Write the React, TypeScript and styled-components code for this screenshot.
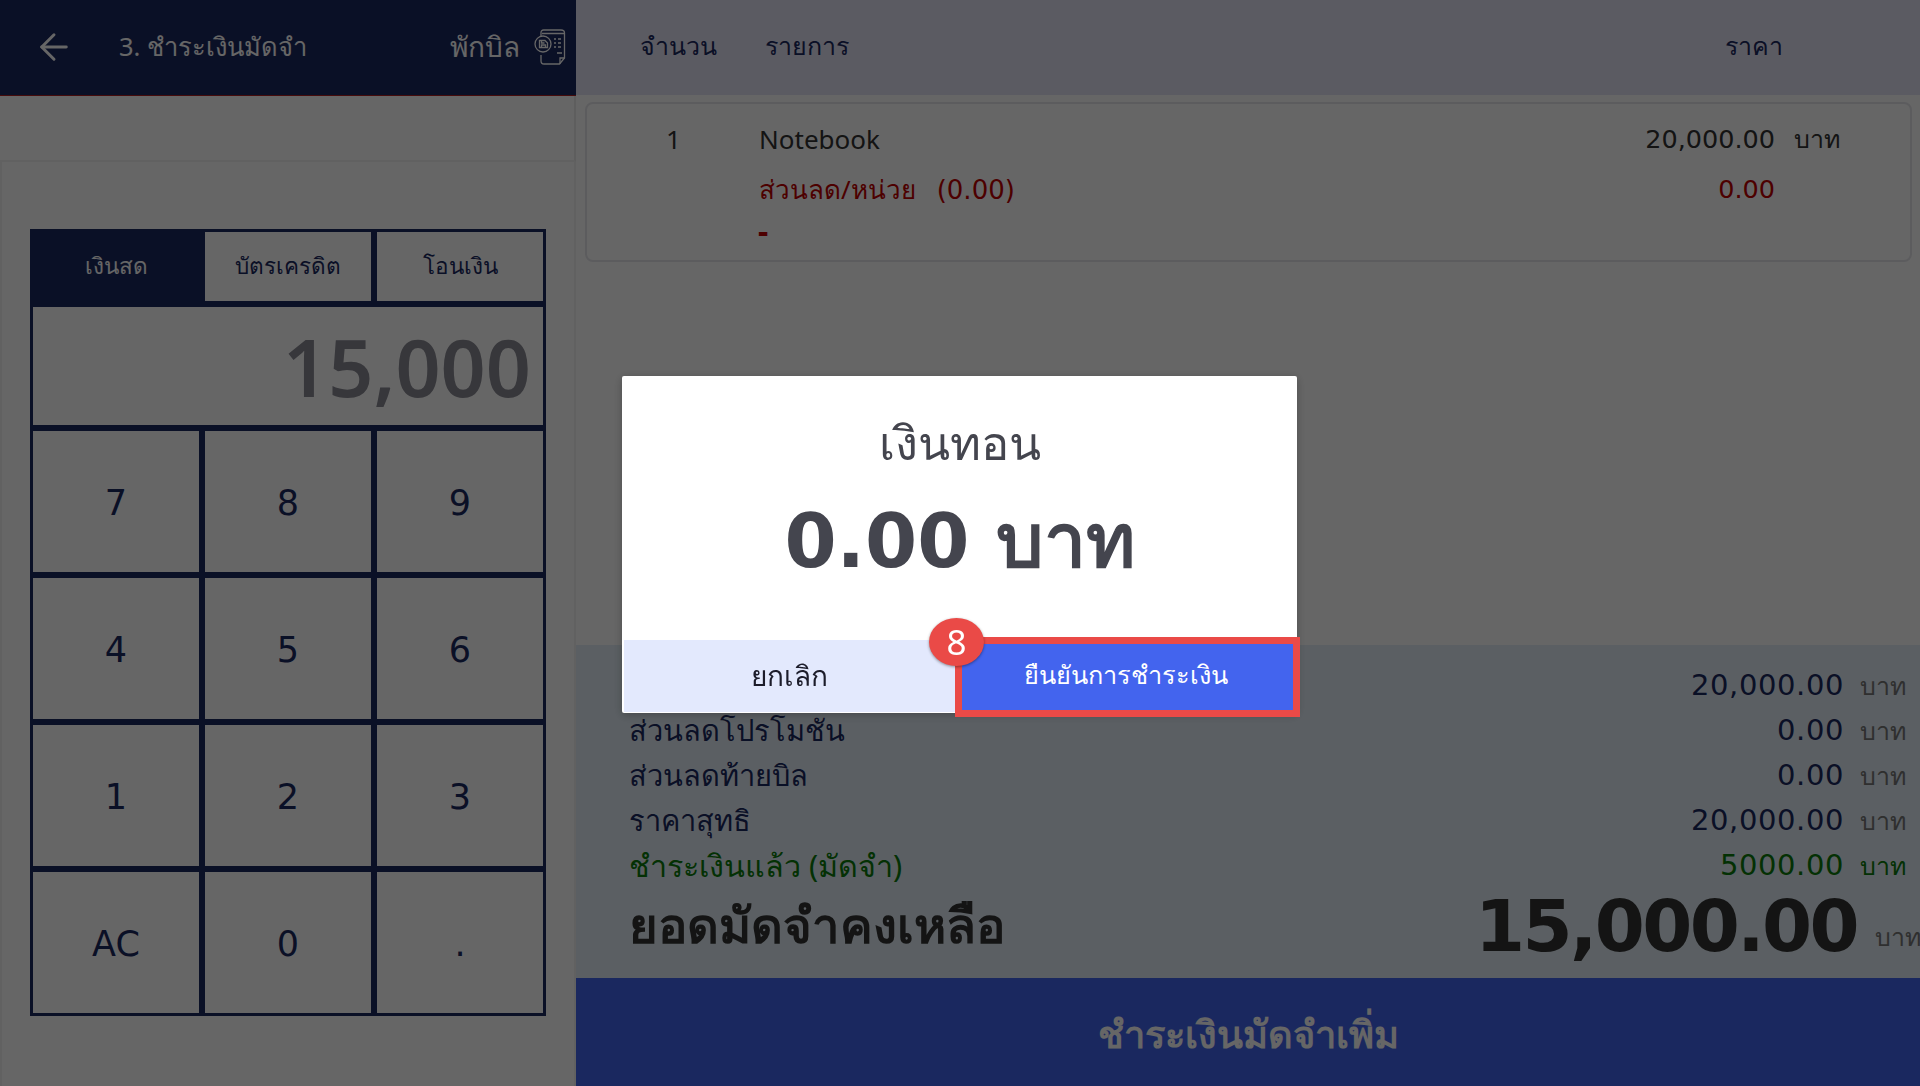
import { ArrowLeft } from "lucide-react";
import styled, { createGlobalStyle } from "styled-components";

const numberFont = `"DejaVu Sans", "Noto Sans", sans-serif`;

const GlobalStyle = createGlobalStyle`
  html, body {
    margin: 0;
    padding: 0;
    background: #fff;
    font-family: "Noto Sans", "Open Sans", sans-serif;
  }
  * {
    box-sizing: border-box;
  }
`;

const Page = styled.div`
  display: flex;
  width: 1920px;
  height: 1086px;
  overflow: hidden;
`;

const LeftPanel = styled.div`
  width: 576px;
  flex-shrink: 0;
  display: flex;
  flex-direction: column;
`;

const LeftHeader = styled.div`
  height: 96px;
  display: flex;
  align-items: center;
  padding: 0 10px 2px 33px;
  background: #1b285f;
  color: #fff;
  border-bottom: 1px solid #b02020;
  font-size: 25.5px;
`;

const BackIcon = styled(ArrowLeft)`
  width: 42px;
  height: 42px;
  margin-right: 44px;
  stroke-width: 1.7;
`;

const HeaderTitle = styled.span`
  flex: 1;
`;

const HoldLabel = styled.span`
  margin-right: 14px;
  font-size: 28px;
`;

const SpacerBar = styled.div`
  height: 66px;
  border-bottom: 2px solid #f2f2f2;
  border-right: 2px solid #ececec;
`;

const PadArea = styled.div`
  flex: 1;
  padding: 67px 28px 0 28px;
  border-left: 2px solid #f2f2f2;
  border-right: 2px solid #f2f2f2;
`;

const Keypad = styled.div`
  display: grid;
  grid-template-columns: repeat(3, 166px);
  grid-template-rows: 69px 118px repeat(4, 141px);
  gap: 6px;
  width: 516px;
  padding: 3px;
  background: #1b285f;
`;

const Tab = styled.div<{ $active?: boolean }>`
  display: flex;
  align-items: center;
  justify-content: center;
  padding-bottom: 1px;
  font-size: 22.5px;
  background: ${(p) => (p.$active ? "#1b285f" : "#fff")};
  color: ${(p) => (p.$active ? "#fff" : "#1b285f")};
`;

const Display = styled.div`
  grid-column: 1 / 4;
  display: flex;
  align-items: center;
  justify-content: flex-end;
  padding-right: 12px;
  background: #fff;
  color: #8a8a94;
  font-size: 79px;
  font-weight: 600;
`;

const Key = styled.div`
  display: flex;
  align-items: center;
  justify-content: center;
  padding-top: 2px;
  background: #fff;
  color: #1b285f;
  font-family: ${numberFont};
  font-size: 35px;
`;

const RightPanel = styled.div`
  flex: 1;
  min-width: 0;
  display: flex;
  flex-direction: column;
`;

const TableHeader = styled.div`
  height: 95px;
  display: flex;
  align-items: center;
  padding: 0 137px 4px 64px;
  background: #e4e4f5;
  color: #1b285f;
  font-size: 25px;
`;

const QtyHead = styled.span`
  width: 125px;
`;

const NameHead = styled.span`
  flex: 1;
`;

const ItemArea = styled.div`
  flex: 1;
  padding: 7px 8px 0 9px;
`;

const ItemCard = styled.div`
  height: 160px;
  padding: 10px 0 0;
  border: 2px solid #e6e6ec;
  border-radius: 8px;
  font-size: 26px;
  color: #333;
`;

const ItemRow = styled.div<{ $danger?: boolean }>`
  display: flex;
  align-items: center;
  height: 50px;
  color: ${(p) => (p.$danger ? "#c00000" : "#333")};
`;

const ItemQty = styled.span`
  width: 172px;
  padding-left: 79px;
`;

const ItemName = styled.span`
  flex: 1;
`;

const DiscountValue = styled.span`
  margin-left: 21px;
  font-family: ${numberFont};
  font-size: 26px;
`;

const ItemPrice = styled.span`
  font-family: ${numberFont};
  font-size: 25.5px;
`;

const ItemUnit = styled.span`
  width: 135px;
  padding-left: 19px;
  font-size: 25px;
`;

const ItemNote = styled.div`
  padding-left: 171px;
  color: #c00000;
  font-size: 32px;
  font-weight: 700;
  line-height: 34px;
`;

const Summary = styled.div`
  height: 333px;
  padding: 17px 16px 0 53px;
  background: #e3eef7;
  color: #1b285f;
`;

const SummaryRow = styled.div<{ $paid?: boolean }>`
  display: flex;
  align-items: center;
  justify-content: space-between;
  height: 45px;
  font-size: 29px;
  line-height: 40px;
  color: ${(p) => (p.$paid ? "#0a7a0a" : "#1b285f")};
`;

const SummaryAmount = styled.span`
  display: flex;
  align-items: center;
`;

const SummaryValue = styled.span`
  font-family: ${numberFont};
  letter-spacing: 0.6px;
`;

const PaidLabel = styled.span`
  font-size: 30.5px;
`;

const SummaryUnit = styled.span<{ $paid?: boolean }>`
  width: 60px;
  padding-left: 16px;
  font-size: 25px;
  color: ${(p) => (p.$paid ? "#0a7a0a" : "#777")};
`;

const TotalRow = styled.div`
  display: flex;
  align-items: center;
  margin-right: -16px;
  height: 78px;
  color: #333;
`;

const TotalLabel = styled.span`
  flex: 1;
  font-size: 49px;
  font-weight: 700;
`;

const TotalValue = styled.span`
  font-family: ${numberFont};
  font-size: 72px;
  font-weight: 700;
  letter-spacing: -2.6px;
`;

const TotalUnit = styled.span`
  width: 63px;
  padding: 22px 0 0 18px;
  font-size: 25px;
  color: #777;
  white-space: nowrap;
`;

const PayBar = styled.div`
  height: 108px;
  display: flex;
  align-items: center;
  justify-content: center;
  padding-top: 4px;
  background: #4364ee;
  color: #fff;
  font-size: 38px;
  font-weight: 700;
`;

const Overlay = styled.div`
  position: fixed;
  inset: 0;
  display: flex;
  align-items: center;
  justify-content: center;
  padding: 2px 1px 0 0;
  background: rgba(0, 0, 0, 0.6);
`;

const Dialog = styled.div`
  width: 675px;
  height: 337px;
  display: flex;
  flex-direction: column;
  background: #fff;
  border-radius: 2px;
  box-shadow: 0 2px 10px rgba(0, 0, 0, 0.25);
`;

const DialogBody = styled.div`
  flex: 1;
  display: flex;
  flex-direction: column;
  align-items: center;
  padding-top: 36px;
  color: #44454e;
`;

const ChangeTitle = styled.div`
  font-size: 47px;
  line-height: 60px;
`;

const ChangeAmount = styled.div`
  margin-top: 24px;
  font-family: ${numberFont};
  font-size: 75px;
  font-weight: 700;
  line-height: 90px;
`;

const DialogActions = styled.div`
  height: 73px;
  display: flex;
  padding: 0 0 1px 2px;
`;

const CancelButton = styled.button`
  width: 331px;
  border: 0;
  background: #e3e9fd;
  color: #1c1c2a;
  font: inherit;
  font-size: 28px;
`;

const ConfirmButton = styled.button`
  position: relative;
  flex: 1;
  padding-bottom: 2px;
  border: 0;
  background: #4364ee;
  color: #fff;
  font: inherit;
  font-size: 25.3px;
`;

const Highlight = styled.span`
  position: absolute;
  inset: -3px -3px -5px 0;
  border: 7px solid #ea4a47;
`;

const StepBadge = styled.span`
  position: absolute;
  left: -26px;
  top: -22px;
  width: 55px;
  height: 48px;
  display: flex;
  align-items: center;
  justify-content: center;
  border-radius: 50%;
  background: #ea4a47;
  color: #fff;
  font-size: 35px;
  box-shadow: 0 1px 3px rgba(0, 0, 0, 0.4);
`;

const HoldBillIcon = () => (
  <svg width="32" height="36" viewBox="0 0 32 36" fill="none" stroke="#fff" strokeWidth="1.3">
    <path d="M7 8V3.5C7 2 8 1 9.5 1H27c2 0 3.5 1.2 3.5 3v25l-5 6H10c-1.8 0-3-1.2-3-3v-6" />
    <path d="M8 4.5h22M30.5 29h-4.5v6" />
    <circle cx="9" cy="15" r="8" />
    <path d="M5.5 11.5h5.5l2.5 2.5v4.5h-8zM7.5 11.5v2.5h3M7.5 18.5v-2.5h4v2.5" />
    <path d="M20 10h2M24 10h3M20 14h2M24 14h3M20 18h2M24 18h3M23 24h5" />
  </svg>
);

const summaryRows = [
  { label: "ราคารวม", value: "20,000.00" },
  { label: "ส่วนลดโปรโมชัน", value: "0.00" },
  { label: "ส่วนลดท้ายบิล", value: "0.00" },
  { label: "ราคาสุทธิ", value: "20,000.00" },
];

const keys = ["7", "8", "9", "4", "5", "6", "1", "2", "3", "AC", "0", "."];

export default function App() {
  return (
    <>
      <GlobalStyle />
      <Page>
        <LeftPanel>
          <LeftHeader>
            <BackIcon />
            <HeaderTitle>3. ชำระเงินมัดจำ</HeaderTitle>
            <HoldLabel>พักบิล</HoldLabel>
            <HoldBillIcon />
          </LeftHeader>
          <SpacerBar />
          <PadArea>
            <Keypad>
              <Tab $active>เงินสด</Tab>
              <Tab>บัตรเครดิต</Tab>
              <Tab>โอนเงิน</Tab>
              <Display>15,000</Display>
              {keys.map((k) => (
                <Key key={k}>{k}</Key>
              ))}
            </Keypad>
          </PadArea>
        </LeftPanel>
        <RightPanel>
          <TableHeader>
            <QtyHead>จำนวน</QtyHead>
            <NameHead>รายการ</NameHead>
            <span>ราคา</span>
          </TableHeader>
          <ItemArea>
            <ItemCard>
              <ItemRow>
                <ItemQty>1</ItemQty>
                <ItemName>Notebook</ItemName>
                <ItemPrice>20,000.00</ItemPrice>
                <ItemUnit>บาท</ItemUnit>
              </ItemRow>
              <ItemRow $danger>
                <ItemQty />
                <ItemName>
                  ส่วนลด/หน่วย<DiscountValue>(0.00)</DiscountValue>
                </ItemName>
                <ItemPrice>0.00</ItemPrice>
                <ItemUnit />
              </ItemRow>
              <ItemNote>-</ItemNote>
            </ItemCard>
          </ItemArea>
          <Summary>
            {summaryRows.map((r) => (
              <SummaryRow key={r.label}>
                <span>{r.label}</span>
                <SummaryAmount>
                  <SummaryValue>{r.value}</SummaryValue>
                  <SummaryUnit>บาท</SummaryUnit>
                </SummaryAmount>
              </SummaryRow>
            ))}
            <SummaryRow $paid>
              <PaidLabel>ชำระเงินแล้ว (มัดจำ)</PaidLabel>
              <SummaryAmount>
                <SummaryValue>5000.00</SummaryValue>
                <SummaryUnit $paid>บาท</SummaryUnit>
              </SummaryAmount>
            </SummaryRow>
            <TotalRow>
              <TotalLabel>ยอดมัดจำคงเหลือ</TotalLabel>
              <TotalValue>15,000.00</TotalValue>
              <TotalUnit>บาท</TotalUnit>
            </TotalRow>
          </Summary>
          <PayBar>ชำระเงินมัดจำเพิ่ม</PayBar>
        </RightPanel>
      </Page>
      <Overlay>
        <Dialog>
          <DialogBody>
            <ChangeTitle>เงินทอน</ChangeTitle>
            <ChangeAmount>0.00 บาท</ChangeAmount>
          </DialogBody>
          <DialogActions>
            <CancelButton>ยกเลิก</CancelButton>
            <ConfirmButton>
              <Highlight />
              <StepBadge>8</StepBadge>
              ยืนยันการชำระเงิน
            </ConfirmButton>
          </DialogActions>
        </Dialog>
      </Overlay>
    </>
  );
}
